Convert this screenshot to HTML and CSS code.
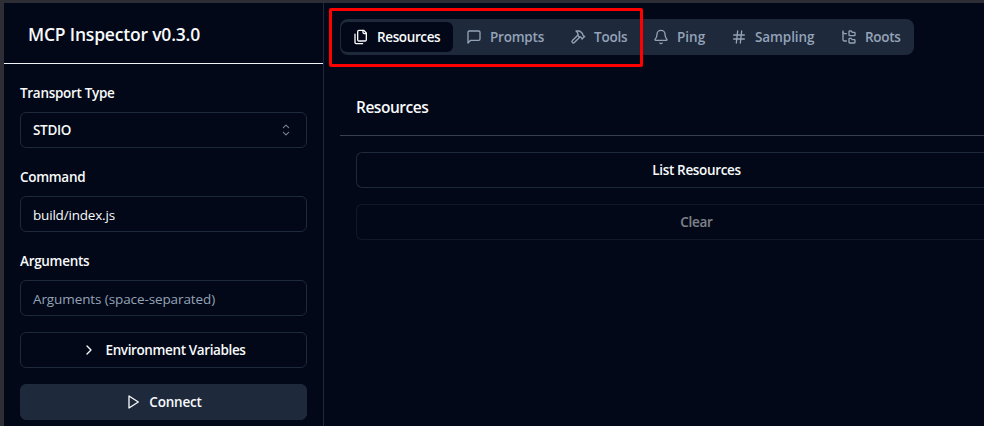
FILE: index.html
```
<!DOCTYPE html>
<html lang="en">
<head>
<meta charset="utf-8">
<title>MCP Inspector</title>
<link rel="stylesheet" href="styles.css">
</head>
<body>
<div class="app">
  <aside class="sidebar">
    <header class="sidebar-header"><h1>MCP Inspector v0.3.0</h1></header>
    <div class="form">
      <div class="field">
        <label class="label">Transport Type</label>
        <div class="control select"><span>STDIO</span>
          <svg class="updown" viewBox="0 0 15 15"><path d="M5 5.3 7.5 2.9 10 5.3M5 9.7l2.5 2.4L10 9.7"/></svg>
        </div>
      </div>
      <div class="field">
        <label class="label">Command</label>
        <div class="control value">build/index.js</div>
      </div>
      <div class="field">
        <label class="label">Arguments</label>
        <div class="control placeholder">Arguments (space-separated)</div>
      </div>
      <div class="button env">
        <svg class="icon" viewBox="0 0 24 24"><path d="m9 18 6-6-6-6"/></svg>
        <span>Environment Variables</span>
      </div>
      <div class="button connect">
        <svg class="icon" viewBox="0 0 24 24"><path d="m6 3 14 9-14 9z"/></svg>
        <span>Connect</span>
      </div>
    </div>
  </aside>
  <main class="main">
    <nav class="tabs">
      <div class="tab active resources">
        <svg class="icon" viewBox="0 0 24 24"><path d="M20 7h-3a2 2 0 0 1-2-2V2"/><path d="M9 18a2 2 0 0 1-2-2V4a2 2 0 0 1 2-2h7l4 4v10a2 2 0 0 1-2 2Z"/><path d="M3 7.6v12.8A1.6 1.6 0 0 0 4.6 22h9.8"/></svg>
        <span>Resources</span>
      </div>
      <div class="tab prompts">
        <svg class="icon" viewBox="0 0 24 24"><path d="M21 15a2 2 0 0 1-2 2H7l-4 4V5a2 2 0 0 1 2-2h14a2 2 0 0 1 2 2z"/></svg>
        <span>Prompts</span>
      </div>
      <div class="tab tools">
        <svg class="icon" viewBox="0 0 24 24"><path d="m15 12-8.373 8.373a1 1 0 1 1-3-3L12 9"/><path d="m18 15 4-4"/><path d="m21.5 11.5-1.914-1.914A2 2 0 0 1 19 8.172V7l-2.26-2.26a6 6 0 0 0-4.202-1.756L9 2.96l.92.82A6.18 6.18 0 0 1 12 8.4V10l2 2h1.172a2 2 0 0 1 1.414.586L18.5 14.5"/></svg>
        <span>Tools</span>
      </div>
      <div class="tab ping">
        <svg class="icon" viewBox="0 0 24 24"><path d="M10.268 21a2 2 0 0 0 3.464 0"/><path d="M3.262 15.326A1 1 0 0 0 4 17h16a1 1 0 0 0 .74-1.673C19.41 13.956 18 12.499 18 8A6 6 0 0 0 6 8c0 4.499-1.411 5.956-2.738 7.326"/></svg>
        <span>Ping</span>
      </div>
      <div class="tab sampling">
        <svg class="icon" viewBox="0 0 24 24"><path d="M4 9h16M4 15h16M10 3 8 21M16 3l-2 18"/></svg>
        <span>Sampling</span>
      </div>
      <div class="tab roots">
        <svg class="icon" viewBox="0 0 24 24"><path d="M20 10a1 1 0 0 0 1-1V6a1 1 0 0 0-1-1h-2.5a1 1 0 0 1-.8-.4l-.9-1.2A1 1 0 0 0 15 3h-2a1 1 0 0 0-1 1v5a1 1 0 0 0 1 1Z"/><path d="M20 21a1 1 0 0 0 1-1v-3a1 1 0 0 0-1-1h-2.9a1 1 0 0 1-.88-.55l-.42-.85a1 1 0 0 0-.92-.6H13a1 1 0 0 0-1 1v5a1 1 0 0 0 1 1Z"/><path d="M3 5a2 2 0 0 0 2 2h3"/><path d="M3 3v13a2 2 0 0 0 2 2h3"/></svg>
        <span>Roots</span>
      </div>
    </nav>
    <section class="panel">
      <h2>Resources</h2>
      <div class="actions">
        <div class="button list">List Resources</div>
        <div class="button clear">Clear</div>
      </div>
    </section>
  </main>
</div>
<div class="highlight"></div>
</body>
</html>
```
FILE: styles.css
```
* { box-sizing: border-box; }
html, body { height: 100%; }
body {
  margin: 0;
  overflow: hidden;
  background: #020817;
  color: #f8fafc;
  font: 650 13.5px/20px "Open Sans", "Noto Sans", sans-serif;
  letter-spacing: -0.3px;
}
h1, h2 { margin: 0; font-weight: 600; }
.app {
  display: flex;
  height: 426px;
  border-left: 4px solid #2c2d35;
  border-top: 3px solid #2c2d35;
}
.sidebar {
  flex: none;
  width: 320px;
  border-right: 1px solid #1e293b;
}
.sidebar-header {
  height: 61px;
  padding: 17px 24px 0;
  border-bottom: 1px solid #f1f5f9;
}
h1 { font-size: 17.5px; line-height: 28px; letter-spacing: -0.19px; }
.form {
  display: flex;
  flex-direction: column;
  gap: 16px;
  padding: 16px;
}
.label { display: block; padding: 3px 0 9px; }
.control, .button {
  display: flex;
  align-items: center;
  height: 36px;
  border: 1px solid #1e293b;
  border-radius: 6px;
}
.control { padding: 0 12px; }
.select { justify-content: space-between; }
.value, .placeholder { font-weight: 400; padding-top: 1px; letter-spacing: -0.19px; }
.placeholder { color: #94a3b8; letter-spacing: -0.1px; }
.button { justify-content: center; gap: 8px; }
.env { letter-spacing: -0.38px; }
.connect { background: #1e293b; letter-spacing: -0.2px; }
.icon, .updown {
  flex: none;
  width: 16px;
  height: 16px;
  fill: none;
  stroke: currentColor;
  stroke-width: 2;
  stroke-linecap: round;
  stroke-linejoin: round;
}
.updown { stroke-width: 1; color: #7d838f; }
.main { flex: 1; min-width: 0; padding: 16px 0 0 16px; }
.tabs {
  display: flex;
  align-items: center;
  width: 574px;
  height: 36px;
  padding: 0 1px;
  border-radius: 8px;
  background: #1e293b;
  color: #94a3b8;
}
.tab {
  display: flex;
  align-items: center;
  gap: 8px;
  height: 30px;
  padding: 0 12px;
  border-radius: 6px;
  white-space: nowrap;
}
.active { background: #020817; color: #f8fafc; }
.resources { width: 112px; letter-spacing: -0.38px; }
.prompts { width: 104px; margin-left: 1px; letter-spacing: -0.22px; }
.tools { width: 83px; letter-spacing: -0.22px; }
.ping { width: 78px; letter-spacing: 0; }
.sampling { width: 110px; letter-spacing: -0.1px; }
.roots { width: 84px; }
.panel { padding-top: 32px; }
h2 {
  height: 49px;
  padding: 8px 16px 0;
  border-bottom: 1px solid #374151;
  font-size: 15.5px;
  font-weight: 650;
  line-height: 24px;
  letter-spacing: -0.48px;
}
.actions {
  display: flex;
  flex-direction: column;
  gap: 16px;
  padding: 16px 0 16px 16px;
}
/* The action buttons run flush to the right edge of the window */
.actions .button {
  padding-left: 52px;
  border-right: 0;
  border-radius: 6px 0 0 6px;
}
.list { letter-spacing: -0.35px; }
.clear { opacity: 0.5; }
/* Callout drawn over the first three tabs */
.highlight {
  position: absolute;
  left: 329px;
  top: 8px;
  width: 314px;
  height: 59px;
  border: 3px solid #f00;
  border-radius: 2px;
}
```
